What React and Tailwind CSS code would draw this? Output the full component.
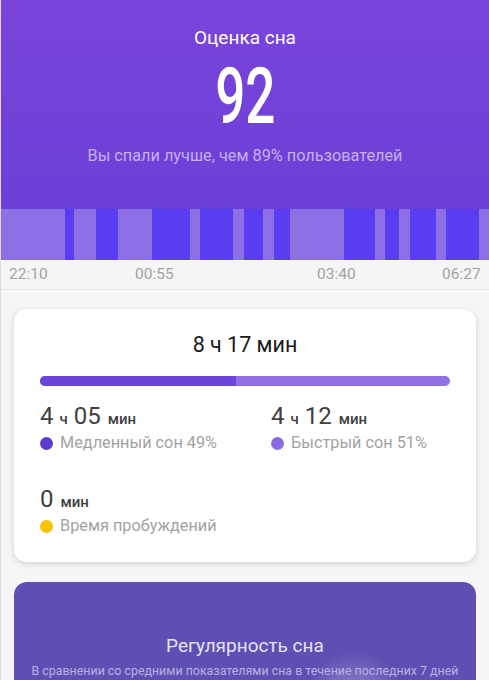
const segments = [
  [0, 64, 0], [64, 73, 1], [73, 95, 0], [95, 117, 1], [117, 151, 0], [151, 189, 1],
  [189, 199, 0], [199, 232, 1], [232, 243, 0], [243, 263, 1], [263, 274, 0], [274, 290, 1],
  [290, 344, 0], [344, 375, 1], [375, 385, 0], [385, 399, 1], [399, 410, 0], [410, 436, 1],
  [436, 446, 0], [446, 479, 1], [479, 489, 0],
];

function Stat({ h, m, dot, label }) {
  return (
    <div>
      <div className="flex items-baseline text-[#404040] leading-none h-[24px]">
        {h !== undefined && (
          <>
            <span className="text-[24px]">{h}</span>
            <span className="text-[15px] font-medium ml-[6px] mr-[6px]">ч</span>
          </>
        )}
        <span className="text-[24px]">{m}</span>
        <span className="text-[15px] ml-[7px] font-medium">мин</span>
      </div>
      <div className="flex items-center mt-[3px]">
        <span className={`w-[13px] h-[13px] rounded-full ${dot}`}></span>
        <span className="ml-[7px] text-[16.3px] text-[#a3a3a3]">{label}</span>
      </div>
    </div>
  );
}

export default function App() {
  return (
    <div className="w-[489px] h-[680px] overflow-hidden bg-[#f6f6f8] border-l border-[#dcdcdc] font-['Roboto',sans-serif]">
      {/* Header */}
      <div className="h-[209px] bg-gradient-to-b from-[#7a44dc] to-[#6b40d6] flex flex-col items-center text-white">
        <div className="mt-[25px] text-[19px] leading-[26px]">Оценка сна</div>
        <div className="mt-[8px] h-[76px] flex items-center">
          <span className="inline-block scale-x-[0.68] text-[78px] font-medium leading-none">92</span>
        </div>
        <div className="mt-[9px] text-[16.3px] text-[#c5b0f2]">Вы спали лучше, чем 89% пользователей</div>
      </div>

      {/* Sleep phases */}
      <div className="flex h-[51px]">
        {segments.map(([a, b, deep], i) => (
          <div
            key={i}
            className={deep ? "bg-[#5a3df0]" : "bg-[#8e70e6]"}
            style={{ width: b - a }}
          />
        ))}
      </div>
      <div className="relative h-[30px] bg-[#f5f5f6] border-b border-[#e6e6e8] text-[15.5px] text-[#a3a3a3]">
        <span className="absolute left-[8px] top-[3px]">22:10</span>
        <span className="absolute left-[134px] top-[3px]">00:55</span>
        <span className="absolute left-[316px] top-[3px]">03:40</span>
        <span className="absolute left-[441px] top-[3px]">06:27</span>
      </div>

      {/* Summary card */}
      <div className="mx-[13px] mt-[19px] h-[253px] rounded-[13px] bg-white shadow-[0_2px_6px_rgba(0,0,0,0.15)] px-[26px] pt-[23px]">
        <div className="text-center text-[21.5px] text-[#1a1a1a] leading-[26px]">8 ч 17 мин</div>
        <div className="mt-[18px] h-[10px] rounded-full bg-[#9170e4] flex overflow-hidden">
          <div className="w-[196px] bg-[#6a45d8]"></div>
        </div>
        <div className="mt-[18px] grid grid-cols-[231px_1fr] gap-y-[32px]">
          <Stat h="4" m="05" dot="bg-[#5b3bd0]" label="Медленный сон 49%" />
          <Stat h="4" m="12" dot="bg-[#8a6ae2]" label="Быстрый сон 51%" />
          <Stat m="0" dot="bg-[#f8c200]" label="Время пробуждений" />
        </div>
      </div>

      {/* Regularity card */}
      <div className="relative mx-[13px] mt-[20px] h-[120px] rounded-[13px] bg-[#5e4fb2] overflow-hidden text-center">
        <div className="absolute left-[280px] top-[60px] w-[120px] h-[120px] rounded-full bg-[radial-gradient(circle,rgba(255,255,255,0.35),rgba(255,255,255,0)_60%)]"></div>
        <div className="relative pt-[50px] text-[19px] text-[#e6e2f7]">Регулярность сна</div>
        <div className="relative mt-[1px] text-[12.4px] text-[#b9b1e3] whitespace-nowrap">В сравнении со средними показателями сна в течение последних 7 дней</div>
      </div>
    </div>
  );
}
